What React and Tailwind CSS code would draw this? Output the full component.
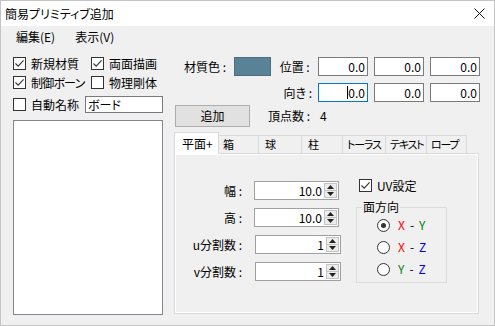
import React from 'react';

const font = { fontFamily: '"Noto Sans CJK JP", "Noto Sans", sans-serif' };

function Check({ checked }) {
  return (
    <span className="w-[13px] h-[13px] border border-[#333333] bg-white flex items-center justify-center shrink-0">
      {checked && (
        <svg width="11" height="11" viewBox="0 0 11 11">
          <path d="M1.5 5.5 L4.2 8.2 L9.6 2.4" fill="none" stroke="#333333" strokeWidth="1.1" />
        </svg>
      )}
    </span>
  );
}

function Radio({ checked }) {
  return (
    <span className="w-[13px] h-[13px] rounded-full border border-[#333333] bg-white flex items-center justify-center shrink-0">
      {checked && <span className="w-[5px] h-[5px] rounded-full bg-[#333333]" />}
    </span>
  );
}

function CheckItem({ checked, label, className = '', tight }) {
  return (
    <div className={`flex items-center gap-[5px] ${className}`}>
      <Check checked={checked} />
      <span className={`whitespace-nowrap ${tight ? 'tracking-[-0.8px]' : ''}`}>{label}</span>
    </div>
  );
}

function Edit({ value, focused }) {
  return (
    <div
      className={`w-[50px] h-[19px] bg-white border flex items-center justify-end pr-[2px] ${
        focused ? 'border-[#0078d7]' : 'border-[#7a7a7a]'
      }`}
    >
      {focused && <span className="w-px h-[13px] bg-black" />}
      <span>{value}</span>
    </div>
  );
}

function Spin({ label, value, wide }) {
  return (
    <div className="flex items-center h-[19px]">
      <span className="w-[67px] text-right">{label}</span>
      <div
        className={`h-[19px] bg-white border border-[#a0a0a0] flex items-stretch ${
          wide ? 'ml-[13px] w-[86px]' : 'ml-[12px] w-[85px]'
        }`}
      >
        <span className="flex-1 flex items-center justify-end pr-[2px]">{value}</span>
        <div className="w-[13px] my-[1px] mr-[1px] flex flex-col border border-[#c4c4c4] bg-[#ececec]">
          <div className="flex-1 flex items-center justify-center border-b border-[#c4c4c4]">
            <svg width="7" height="4" viewBox="0 0 7 4"><path d="M3.5 0 L7 4 L0 4 Z" fill="#222" /></svg>
          </div>
          <div className="flex-1 flex items-center justify-center">
            <svg width="7" height="4" viewBox="0 0 7 4"><path d="M0 0 L7 0 L3.5 4 Z" fill="#222" /></svg>
          </div>
        </div>
      </div>
    </div>
  );
}

function Axis({ a, ca, b, cb, checked }) {
  return (
    <div className="h-[22px] flex items-center">
      <Radio checked={checked} />
      <span className="ml-[8px] flex gap-[5px]">
        <span className={ca}>{a}</span>
        <span>-</span>
        <span className={cb}>{b}</span>
      </span>
    </div>
  );
}

const tabs = [
  { label: '箱', w: 'w-[40px]', pl: 'pl-[4px]' },
  { label: '球', w: 'w-[43px]', pl: 'pl-[6px]' },
  { label: '柱', w: 'w-[41px]', pl: 'pl-[6px]' },
  { label: 'トーラス', w: 'w-[43px]', pl: 'pl-[4px]' },
  { label: 'テキスト', w: 'w-[41px]', pl: 'pl-[4px]' },
  { label: 'ロープ', w: 'w-[40px]', pl: 'pl-[4px]' },
];

export default function App() {
  return (
    <div
      style={font}
      className="w-[495px] h-[326px] border border-[#c4c4c4] bg-[#f0f0f0] flex flex-col text-[12px] leading-none text-black overflow-hidden [font-feature-settings:'palt']"
    >
      {/* title bar */}
      <div className="h-[25px] bg-white flex items-center pl-[4px] pr-[9px] shrink-0">
        <span>簡易プリミティブ追加</span>
        <svg className="ml-auto" width="11" height="11" viewBox="0 0 11 11">
          <path d="M0.5 0.5 L10.5 10.5 M10.5 0.5 L0.5 10.5" stroke="#111" strokeWidth="1" />
        </svg>
      </div>

      {/* menu */}
      <div className="h-[21px] flex items-center pl-[15px] gap-[20px] shrink-0">
        <span>編集(E)</span>
        <span>表示(V)</span>
      </div>

      <div className="flex flex-1">
        {/* left column */}
        <div className="pl-[12px] w-[162px] flex flex-col">
          <div className="mt-[7px] h-[19px] flex items-center">
            <CheckItem checked label="新規材質" className="w-[78px]" />
            <CheckItem checked label="両面描画" />
          </div>
          <div className="h-[19px] flex items-center">
            <CheckItem checked label="制御ボーン" className="w-[78px]" tight />
            <CheckItem label="物理剛体" />
          </div>
          <div className="mt-[4px] h-[17px] flex items-center">
            <CheckItem label="自動名称" className="w-[72px]" />
            <div className="flex-1 h-[17px] bg-white border border-[#7a7a7a] flex items-center pl-[2px]">ボード</div>
          </div>
          <div className="mt-[7px] h-[195px] bg-white border border-[#828790]" />
        </div>

        {/* right column */}
        <div className="ml-[11px] w-[306px] flex flex-col">
          <div className="mt-[10px] h-[19px] flex items-center">
            <span className="w-[61px] pl-[10px]">材質色 :</span>
            <span className="w-[37px] h-[19px] bg-[#5a8296] border border-[#4a6f80]" />
            <span className="ml-[6px] w-[42px] pl-[3px]">位置 :</span>
            <div className="flex gap-[6px]">
              <Edit value="0.0" />
              <Edit value="0.0" />
              <Edit value="0.0" />
            </div>
          </div>
          <div className="mt-[7px] h-[19px] flex items-center">
            <span className="w-[146px] text-right pr-[6px]">向き :</span>
            <div className="flex gap-[6px]">
              <Edit value="0.0" focused />
              <Edit value="0.0" />
              <Edit value="0.0" />
            </div>
          </div>
          <div className="mt-[3px] h-[22px] flex items-center">
            <div className="ml-px w-[75px] h-[22px] bg-[#e1e1e1] border border-[#adadad] flex items-center justify-center">追加</div>
            <span className="ml-[18px]">頂点数 :</span>
            <span className="ml-[10px]">4</span>
          </div>

          {/* tabs */}
          <div className="mt-[5px] h-[21px] flex items-end relative z-10">
            <div className="w-[45px] h-[22px] -mb-px bg-white border-t border-l border-r border-[#d9d9d9] flex items-center pl-[7px]">
              平面+
            </div>
            {tabs.map((t) => (
              <div
                key={t.label}
                className={`${t.w} ${t.pl} h-[18px] border-t border-r border-[#d9d9d9] flex items-center whitespace-nowrap overflow-hidden text-[11px] tracking-[-1.2px]`}
              >
                {t.label}
              </div>
            ))}
          </div>
          <div className="w-[305px] h-[161px] border border-[#d9d9d9] shadow-[inset_0_0_0_1px_#ffffff] flex pt-[27px]">
            <div className="w-[166px] flex flex-col gap-[8px]">
              <Spin label="幅 :" value="10.0" />
              <Spin label="高 :" value="10.0" />
              <Spin label="u分割数 :" value="1" wide />
              <Spin label="v分割数 :" value="1" wide />
            </div>
            <div className="ml-[15px] -mt-[5px] flex flex-col">
              <div className="h-[19px] flex items-center pl-[3px]">
                <CheckItem checked label="UV設定" />
              </div>
              <fieldset className="mt-[6px] w-[91px] h-[82px] border border-[#dcdcdc] pl-[20px] pb-[2px]">
                <legend className="ml-[-15px] px-[1px] leading-[12px]">面方向</legend>
                <div className="mt-[1px]">
                  <Axis checked a="X" ca="text-[#ff0000]" b="Y" cb="text-[#008000]" />
                  <Axis a="X" ca="text-[#ff0000]" b="Z" cb="text-[#0000ff]" />
                  <Axis a="Y" ca="text-[#008000]" b="Z" cb="text-[#0000ff]" />
                </div>
              </fieldset>
            </div>
          </div>
        </div>
      </div>
    </div>
  );
}
